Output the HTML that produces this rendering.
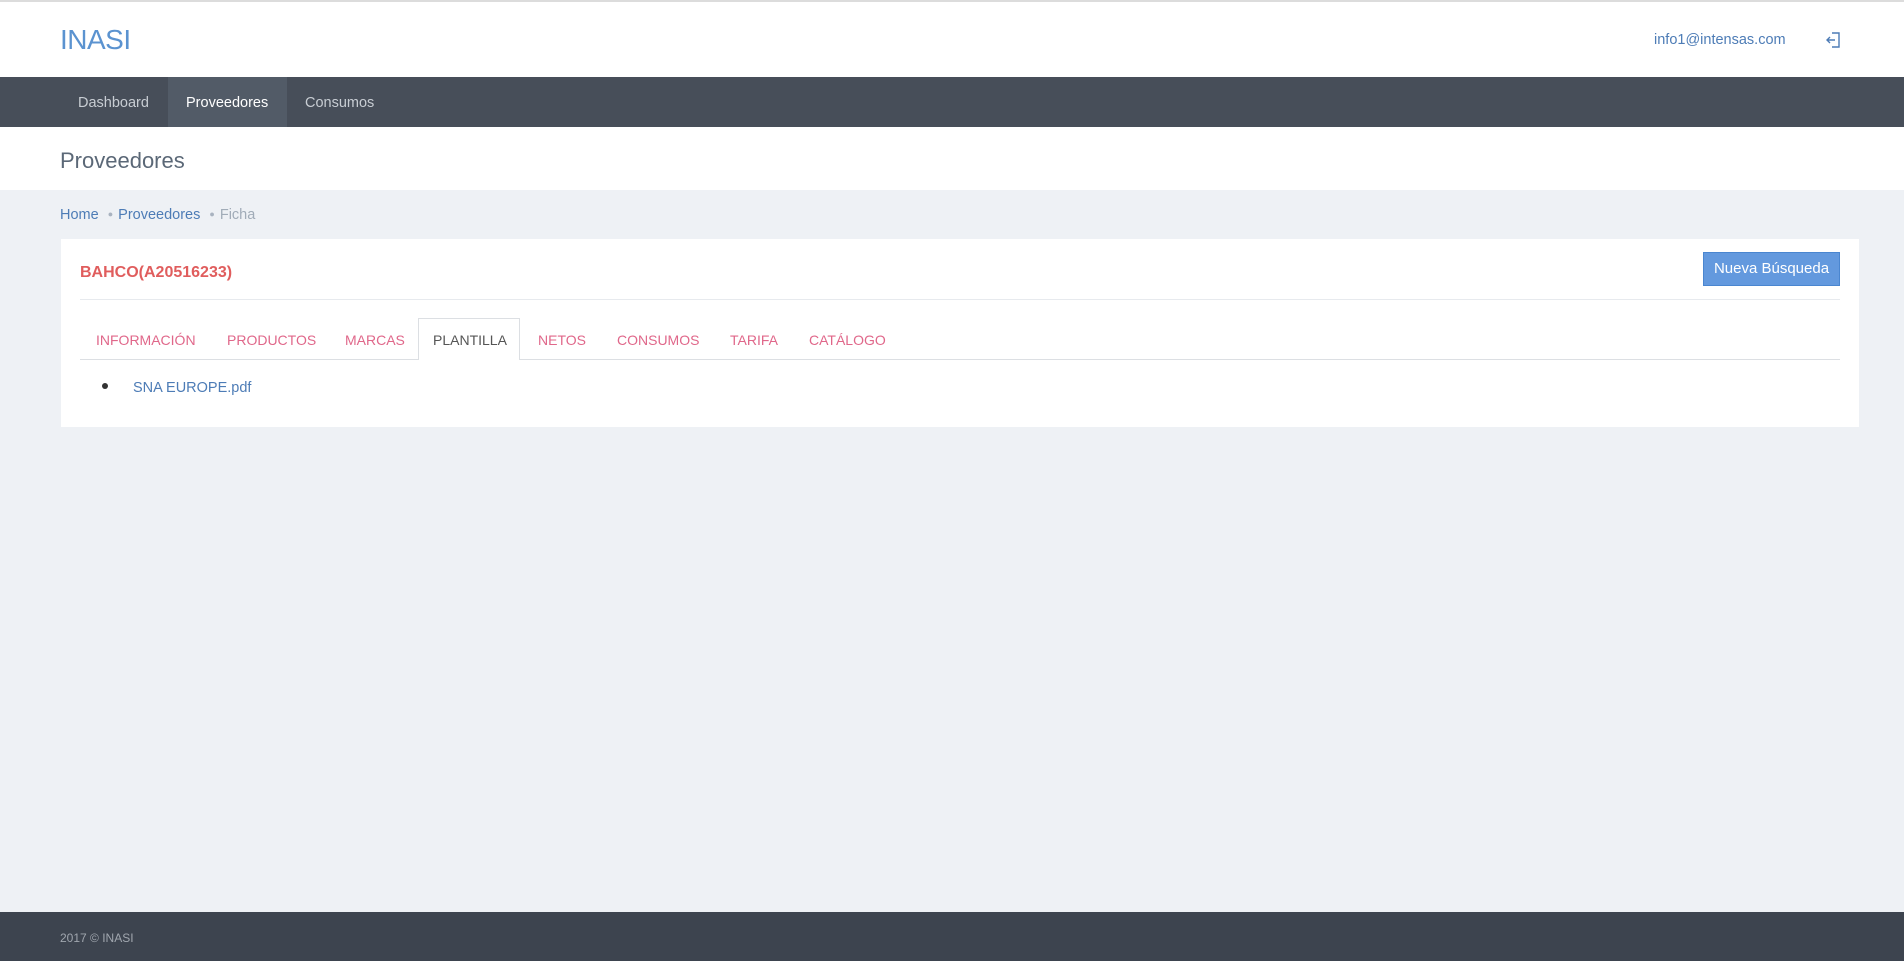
<!DOCTYPE html>
<html><head><meta charset="utf-8"><style>
*{margin:0;padding:0;box-sizing:border-box}
body{width:1904px;height:961px;background:#eef1f5;font-family:"Liberation Sans",sans-serif;position:relative;overflow:hidden}
.a{position:absolute;white-space:nowrap}
</style></head><body>
<div class="a" style="left:0;top:0;width:1904px;height:77px;background:#fff;border-top:2px solid #dcdcdc"></div>
<div class="a" style="left:60px;top:24px;font-size:28px;color:#5b93d0;letter-spacing:-0.5px">INASI</div>
<div class="a" style="left:1654px;top:32px;font-size:14.5px;color:#4d7cb6">info1@intensas.com</div>
<svg class="a" style="left:1825px;top:31px" width="16" height="18" viewBox="0 0 16 18"><path d="M7 2H14V16H7" fill="none" stroke="#4d7cb6" stroke-width="1.4"/><path d="M2 9H10M5 6L2 9L5 12" fill="none" stroke="#4d7cb6" stroke-width="1.4"/></svg>
<div class="a" style="left:0;top:77px;width:1904px;height:50px;background:#474e59"></div>
<div class="a" style="left:168px;top:77px;width:119px;height:50px;background:#525b67"></div>
<div class="a" style="left:78px;top:95px;font-size:14.5px;color:#c8cdd3">Dashboard</div>
<div class="a" style="left:186px;top:95px;font-size:14.5px;color:#fff">Proveedores</div>
<div class="a" style="left:305px;top:95px;font-size:14.5px;color:#c8cdd3">Consumos</div>
<div class="a" style="left:0;top:127px;width:1904px;height:63px;background:#fff"></div>
<div class="a" style="left:60px;top:148px;font-size:22px;color:#5b6877">Proveedores</div>
<div class="a" style="left:60px;top:207px;font-size:14.5px;color:#4d7cb6">Home <span style="color:#a9b3c0;font-size:9px;margin:0 5px;vertical-align:2px">●</span>Proveedores <span style="color:#a9b3c0;font-size:9px;margin:0 5px;vertical-align:2px">●</span><span style="color:#a1acb8">Ficha</span></div>
<div class="a" style="left:61px;top:239px;width:1798px;height:188px;background:#fff"></div>
<div class="a" style="left:80px;top:264px;font-size:16px;font-weight:bold;color:#e05d5d">BAHCO(A20516233)</div>
<div class="a" style="left:1703px;top:252px;width:137px;height:34px;background:#6399de;border:1px solid #4a86d0;color:#fff;font-size:15px;text-align:center;line-height:32px">Nueva Búsqueda</div>
<div class="a" style="left:80px;top:299px;width:1760px;height:1px;background:#e7eaee"></div>
<div class="a" style="left:80px;top:359px;width:1760px;height:1px;background:#dcdfe3"></div>
<div class="a" style="left:418px;top:318px;width:102px;height:42px;background:#fff;border:1px solid #dcdfe3;border-bottom:none"></div>
<div class="a" style="left:96px;top:332px;font-size:14px;color:#e0678a">INFORMACIÓN</div>
<div class="a" style="left:227px;top:332px;font-size:14px;color:#e0678a">PRODUCTOS</div>
<div class="a" style="left:345px;top:332px;font-size:14px;color:#e0678a">MARCAS</div>
<div class="a" style="left:433px;top:332px;font-size:14px;color:#555">PLANTILLA</div>
<div class="a" style="left:538px;top:332px;font-size:14px;color:#e0678a">NETOS</div>
<div class="a" style="left:617px;top:332px;font-size:14px;color:#e0678a">CONSUMOS</div>
<div class="a" style="left:730px;top:332px;font-size:14px;color:#e0678a">TARIFA</div>
<div class="a" style="left:809px;top:332px;font-size:14px;color:#e0678a">CATÁLOGO</div>
<div class="a" style="left:102px;top:383px;width:6px;height:6px;border-radius:3px;background:#333"></div>
<div class="a" style="left:133px;top:380px;font-size:14.5px;color:#4d7cb6">SNA EUROPE.pdf</div>
<div class="a" style="left:0;top:912px;width:1904px;height:49px;background:#3d444f"></div>
<div class="a" style="left:60px;top:931px;font-size:12px;color:#a0a6ae">2017 © INASI</div>
</body></html>
